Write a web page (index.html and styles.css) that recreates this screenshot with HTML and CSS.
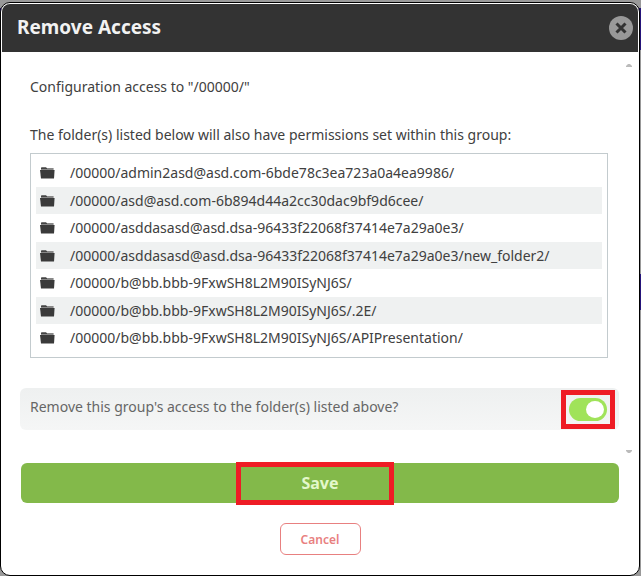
FILE: index.html
```html
<!DOCTYPE html>
<html lang="en">
<head>
  <meta charset="UTF-8">
  <meta name="viewport" content="width=device-width, initial-scale=1.0">
  <title>Remove Access</title>
  <link rel="stylesheet" href="styles.css">
</head>
<body>
  <svg width="0" height="0" class="defs">
    <symbol id="folder" viewBox="0 0 15 12">
      <path d="M1 3V1H13.6V3Z" fill="#888"/>
      <path d="M1 2V1Q1 .2 1.8 .2H6L7 1.2V2Z" fill="#444"/>
      <path d="M0 3H14.6L14 11.5H1Z" fill="#3a3a3a"/>
    </symbol>
  </svg>
  <div class="dialog" role="dialog" aria-labelledby="dialog-title">
    <div class="dialog-header">
      <h1 id="dialog-title">Remove Access</h1>
      <button type="button" class="close" aria-label="Close">
        <svg width="24" height="24" viewBox="0 0 24 24">
          <circle cx="12" cy="12" r="12" fill="#999"/>
          <path d="M7.5 7.5L16.5 16.5M16.5 7.5L7.5 16.5" stroke="#333" stroke-width="3"/>
        </svg>
      </button>
    </div>
    <div class="dialog-body">
      <div class="content">
        <p>Configuration access to "/00000/"</p>
        <p>The folder(s) listed below will also have permissions set within this group:</p>
        <ul class="folders">
          <li><svg><use href="#folder"/></svg>/00000/admin2asd@asd.com-6bde78c3ea723a0a4ea9986/</li>
          <li><svg><use href="#folder"/></svg>/00000/asd@asd.com-6b894d44a2cc30dac9bf9d6cee/</li>
          <li><svg><use href="#folder"/></svg>/00000/asddasasd@asd.dsa-96433f22068f37414e7a29a0e3/</li>
          <li><svg><use href="#folder"/></svg>/00000/asddasasd@asd.dsa-96433f22068f37414e7a29a0e3/new_folder2/</li>
          <li><svg><use href="#folder"/></svg>/00000/b@bb.bbb-9FxwSH8L2M90ISyNJ6S/</li>
          <li><svg><use href="#folder"/></svg>/00000/b@bb.bbb-9FxwSH8L2M90ISyNJ6S/.2E/</li>
          <li><svg><use href="#folder"/></svg>/00000/b@bb.bbb-9FxwSH8L2M90ISyNJ6S/APIPresentation/</li>
        </ul>
        <div class="option">
          <label for="remove">Remove this group's access to the folder(s) listed above?</label>
          <span class="toggle-mark"><input type="checkbox" id="remove" class="toggle" checked></span>
        </div>
      </div>
      <div class="scroll">
        <svg width="6" height="3" viewBox="0 0 6 3"><path d="M0 3V2L2 0H4L6 2V3Z" fill="#bbb"/></svg>
        <svg width="6" height="3" viewBox="0 0 6 3"><path d="M0 0V1L2 3H4L6 1V0Z" fill="#bbb"/></svg>
      </div>
    </div>
    <div class="dialog-footer">
      <div class="save-row">
        <button type="button" class="save">Save</button>
        <span class="save-mark"></span>
      </div>
      <button type="button" class="cancel">Cancel</button>
    </div>
  </div>
</body>
</html>
```
FILE: styles.css
```css
* { box-sizing: border-box; }
body { margin: 0; padding: 2px 1px 0 0; min-height: 100vh; background: linear-gradient(#999 8px, #25147a 8px, #25147a 50px, #999 50px, #999 274px, #25147a 274px, #25147a 310px, #999 310px); font-family: "Noto Sans", sans-serif; font-size: 14px; line-height: 24px; color: #404040; }
.defs { position: absolute; }
svg { display: block; }
button { font-family: inherit; padding: 0; cursor: pointer; }

.dialog { background: #fff; border: 1px solid #000; border-radius: 10px; }
.dialog-header { display: flex; align-items: center; justify-content: space-between; height: 48px; margin: 1px 1px 0; padding: 0 5px 0 15px; background: #333; border-radius: 8px 8px 0 0; }
.dialog-header h1 { margin: 0; padding-bottom: 2px; font-size: 19px; color: #f2f2f2; }
.close { border: none; background: none; }

.dialog-body { display: flex; }
.content { flex: 1; padding: 23px 0 33px 19px; }
.content p { margin: 0 0 24px 10px; }
.content p + p { margin-bottom: 6px; }
.folders { list-style: none; margin: 0 11px 30px 10px; padding: 5px; border: 1px solid #c3cbce; }
.folders li { display: flex; align-items: center; height: 28px; padding-left: 4px; }
.folders li:nth-child(even) { height: 27px; background: #eff1f1; }
.folders svg { width: 15px; height: 12px; margin-right: 15px; }
.option { display: flex; align-items: center; justify-content: space-between; height: 42px; padding: 0 4px 0 10px; background: linear-gradient(#eef0f0, #f5f6f6); border-radius: 6px; color: #666; }
.option label { padding-bottom: 4px; }
.toggle-mark { display: flex; align-items: center; justify-content: center; width: 54px; height: 39px; border: 5px solid #ee1c25; }
.toggle { appearance: none; width: 38px; height: 23px; margin: 0; padding: 3px; border-radius: 12px; background: #a0e35a; display: flex; justify-content: flex-end; cursor: pointer; }
.toggle::before { content: ""; width: 18px; height: 17px; border-radius: 50%; background: #fff; }
.scroll { display: flex; flex-direction: column; justify-content: space-between; align-items: center; width: 20px; padding: 12px 0 10px; }

.dialog-footer { padding: 0 20px 20px; text-align: center; }
.save-row { position: relative; margin-bottom: 20px; }
.save { display: block; width: 100%; height: 40px; border: none; border-radius: 6px; background: #83b94a; color: #e4f8cb; font-size: 16px; font-weight: bold; }
.save-mark { position: absolute; top: -1px; left: 50%; width: 158px; height: 43px; margin-left: -84px; border: 5px solid #ee1c25; pointer-events: none; }
.cancel { display: block; width: 81px; height: 32px; margin: 0 auto; border: 1px solid #e88080; border-radius: 6px; background: #fff; color: #e88080; font-size: 12px; font-weight: 600; }
```
